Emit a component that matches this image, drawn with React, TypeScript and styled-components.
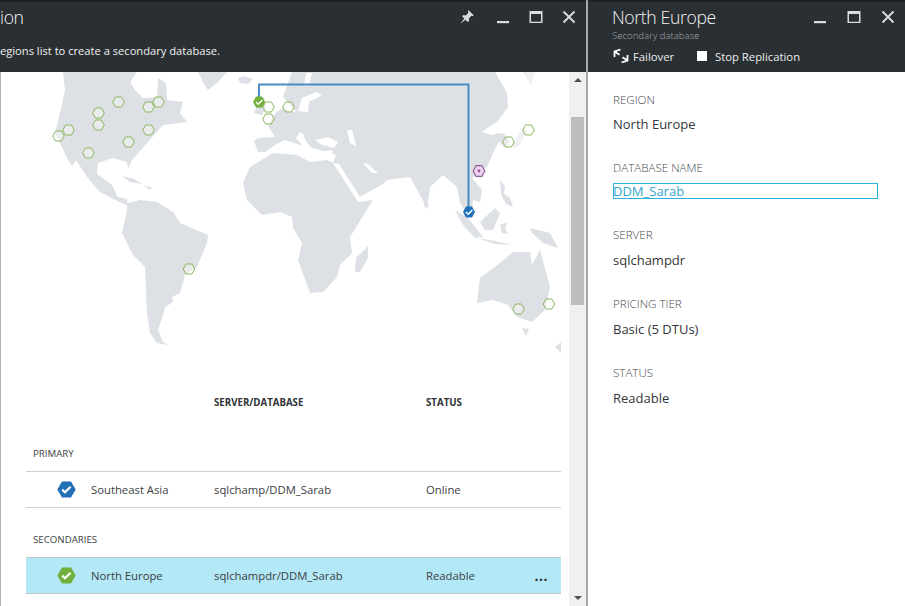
import React from 'react';
import styled, { createGlobalStyle } from 'styled-components';

const Global = createGlobalStyle`
  html, body { margin: 0; padding: 0; background: #fff; overflow: hidden; }
  * { box-sizing: border-box; }
`;

const FONT = `"Open Sans", "Noto Sans", "Liberation Sans", sans-serif`;

const Page = styled.div`
  display: flex;
  width: 905px;
  height: 606px;
  overflow: hidden;
  font-family: ${FONT};
  color: #3c3f42;
`;

const LeftBlade = styled.section`
  width: 588px;
  flex: none;
  display: flex;
  flex-direction: column;
  border-right: 2px solid #a9a9a9;
`;

const RightBlade = styled.section`
  flex: 1;
  display: flex;
  flex-direction: column;
  border-right: 2px solid #3f7391;
`;

const Header = styled.header`
  height: 72px;
  flex: none;
  background: #2a2f33;
  border-top: 2px solid #1e2225;
  display: flex;
  flex-direction: column;
  color: #fff;
  overflow: hidden;
`;

const TitleRow = styled.div<{ $inset: number }>`
  display: flex;
  align-items: flex-start;
  justify-content: space-between;
  padding-left: ${(p) => p.$inset}px;
`;

const Title = styled.h1`
  margin: 0;
  font-size: 17.6px;
  line-height: 30px;
  font-weight: 300;
  letter-spacing: -0.35px;
  color: #f4f5f5;
`;

const ClippedSubtitle = styled.div`
  margin-top: 11px;
  font-size: 11.15px;
  line-height: 16px;
  color: #f0f1f1;
  white-space: nowrap;
`;

const Controls = styled.div<{ $right: number; $gap: number }>`
  display: flex;
  align-items: flex-start;
  gap: ${(p) => p.$gap}px;
  padding: 8px ${(p) => p.$right}px 0 0;
  color: #d9dbdc;
`;

const ControlIcon = styled.svg`
  display: block;
  width: 14px;
  height: 14px;
  flex: none;
`;

const PinIcon = styled(ControlIcon)`
  margin-right: 3px;
`;

const Subtitle = styled.div`
  margin: -2px 0 0 24px;
  font-size: 9.6px;
  line-height: 12px;
  font-weight: 300;
  color: #a4a8aa;
`;

const Toolbar = styled.div`
  display: flex;
  align-items: center;
  margin: 5px 0 0 25px;
  height: 18px;
`;

const ToolItem = styled.div<{ $width: number }>`
  display: flex;
  align-items: center;
  width: ${(p) => p.$width}px;
  font-size: 11.3px;
  color: #eceded;
  white-space: nowrap;
`;

const StopSquare = styled.span`
  display: block;
  width: 10px;
  height: 10px;
  margin-right: 8px;
  background: #fff;
`;

const FailoverIcon = styled.svg`
  display: block;
  width: 16px;
  height: 16px;
  margin-right: 4px;
`;

const Body = styled.div`
  flex: 1;
  min-height: 0;
  display: flex;
`;

const Scroller = styled.div`
  flex: 1;
  min-width: 0;
  border-left: 1px solid #b0b0b0;
`;

const MapSvg = styled.svg`
  display: block;
  width: 568px;
  height: 318px;
`;

const ScrollTrack = styled.div`
  width: 17px;
  flex: none;
  background: #f0f0f0;
  display: flex;
  flex-direction: column;
  align-items: center;
  padding-top: 6px;
`;

const ArrowUp = styled.span`
  width: 0;
  height: 0;
  border-left: 4px solid transparent;
  border-right: 4px solid transparent;
  border-bottom: 4px solid #505050;
`;

const ArrowDown = styled.span`
  width: 0;
  height: 0;
  margin-top: 291px;
  border-left: 4px solid transparent;
  border-right: 4px solid transparent;
  border-top: 4px solid #505050;
`;

const Thumb = styled.div`
  width: 13px;
  height: 188px;
  margin-top: 35px;
  background: #bdbdbd;
`;

const Table = styled.div`
  margin: 0 8px 0 25px;
`;

const GRID = `65px 123px 212px 1fr auto`;

const HeadRow = styled.div`
  display: grid;
  grid-template-columns: ${GRID};
  height: 24px;
  align-items: center;
  font-size: 9.7px;
  font-weight: 700;
  color: #2f3336;
`;

const SectionLabel = styled.div<{ $height: number }>`
  height: ${(p) => p.$height}px;
  display: flex;
  align-items: flex-end;
  padding: 0 0 11px 7px;
  font-size: 9.7px;
  color: #3a3d40;
`;

const Row = styled.div<{ $selected?: boolean }>`
  display: grid;
  grid-template-columns: ${GRID};
  height: 37px;
  align-items: center;
  padding-bottom: 1px;
  font-size: 11.3px;
  color: #3c4043;
  background: ${(p) => (p.$selected ? '#b3e8f7' : 'transparent')};
  border-top: 1px solid ${(p) => (p.$selected ? '#b9c6cb' : '#cfcfcf')};
  border-bottom: 1px solid ${(p) => (p.$selected ? '#b9c6cb' : '#cfcfcf')};
`;

const IconCell = styled.div`
  padding: 1px 0 0 31px;
  display: flex;
`;

const StatusIcon = styled.svg`
  display: block;
  width: 19px;
  height: 17px;
`;

const More = styled.div`
  padding: 2px 13px 0 0;
  font-size: 14px;
  font-weight: 700;
  line-height: 10px;
  letter-spacing: 0.5px;
  color: #2c3033;
`;

const Details = styled.div`
  flex: 1;
  padding: 20px 27px 0 25px;
  background: #fff;
`;

const Field = styled.div<{ $gap?: number }>`
  margin-bottom: ${(p) => p.$gap ?? 24}px;
`;

const FieldLabel = styled.div`
  height: 16px;
  line-height: 16px;
  font-size: 11.6px;
  font-weight: 300;
  color: #44484b;
`;

const FieldValue = styled.div<{ $top?: number }>`
  height: 24px;
  margin-top: ${(p) => p.$top ?? 5}px;
  line-height: 24px;
  font-size: 13px;
  color: #33373a;
`;

const NameInput = styled.input`
  display: block;
  width: 265px;
  height: 16px;
  margin-top: 7px;
  padding: 0;
  text-indent: -1px;
  border: 1px solid #2bb5dc;
  outline: none;
  background: #fff;
  font-family: ${FONT};
  font-size: 13px;
  color: #32a7cf;
`;

const Pin = () => (
  <PinIcon viewBox="0 0 14 14">
    <path
      d="M8.6 0.3 L13.7 5.2 L12.6 6.2 L11.4 5.8 L8.8 8.4 L9.2 11 L7.8 12 L2.2 6.4 L3.2 5 L5.8 5.4 L8.4 2.8 L7.8 1.4 Z M4.4 8.6 L0.2 13.8 L5.6 9.8 Z"
      fill="currentColor"
    />
  </PinIcon>
);
const Minimize = () => (
  <ControlIcon viewBox="0 0 14 14">
    <rect x="1" y="11" width="12" height="2.2" fill="currentColor" />
  </ControlIcon>
);
const Maximize = () => (
  <ControlIcon viewBox="0 0 14 14">
    <path d="M0.5 1 H13.5 V13 H0.5 Z M2 4 V11.7 H12 V4 Z" fill="currentColor" fillRule="evenodd" />
  </ControlIcon>
);
const Close = () => (
  <ControlIcon viewBox="0 0 14 14">
    <path d="M1.5 1.5 L12.5 12.5 M12.5 1.5 L1.5 12.5" stroke="currentColor" strokeWidth="1.9" fill="none" />
  </ControlIcon>
);

const STATUS_HEX = 'M5 0.5 H14 L18.7 8.5 L14 16.5 H5 L0.3 8.5 Z';

const RowIcon = ({ fill }: { fill: string }) => (
  <StatusIcon viewBox="0 0 19 17">
    <path d={STATUS_HEX} fill={fill} />
    <path d="M5.2 8.6 L8 11.2 L13.6 5.8" fill="none" stroke="#fff" strokeWidth="2.2" />
  </StatusIcon>
);

const LAND = [
  // North America
  '63,72 65,90 60,113 55,133 60,143 68,160 72,166 76,160 87,177 100,192 113,199 122,203 128,206 127,199 118,197 112,185 97,174 98,163 113,158 127,162 128,169 132,160 148,142 163,125 187,122 180,113 183,102 167,100 166,83 158,78 157,97 143,98 135,90 130,82 137,72',
  // Greenland, Iceland
  '198,72 227,72 218,82 208,90 203,82',
  '238,78 245,76 253,79 248,84 240,83',
  // Caribbean
  '122,176 134,179 142,184 130,182',
  '144,186 152,187 150,190',
  // South America
  '128,203 140,200 157,202 173,212 180,223 208,235 207,243 197,267 185,275 180,293 172,297 173,302 165,307 163,315 158,330 163,342 168,345 157,343 150,333 147,313 145,267 133,255 122,233 125,220',
  // UK + Ireland
  '258,97 264,97 266,108 262,115 254,113 257,106',
  // Eurasia
  '258,152 254,141 258,138 275,137 268,126 275,113 283,108 290,112 296,112 283,97 292,72 495,72 507,93 508,107 497,122 490,126 482,132 493,135 498,133 504,134 510,142 504,147 499,141 493,153 487,167 472,178 482,190 480,202 473,200 472,210 470,218 460,203 457,187 443,175 430,187 427,208 410,177 387,180 383,184 358,198 333,163 336,155 320,150 300,145 285,140 275,145 265,152',
  // Africa
  '243,183 247,200 262,215 280,212 292,217 293,228 302,243 298,260 310,293 323,292 337,277 340,265 352,253 350,237 373,200 358,202 333,163 327,160 310,162 297,155 273,153 250,167',
  // Madagascar
  '355,272 356,258 368,246 368,258 360,272',
  // Sri Lanka
  '424,200 429,204 427,209 424,206',
  // Sumatra, Java
  '455,210 467,217 483,237 475,238 463,225',
  '477,238 495,241 513,245 495,244',
  // Borneo, Sulawesi, Philippines
  '480,222 495,208 500,213 493,230 485,230',
  '500,225 507,222 505,228 508,234 502,233',
  '500,180 505,186 504,194 510,198 513,207 506,204 501,194',
  // New Guinea
  '530,228 550,233 558,248 543,243 532,233',
  // Australia
  '477,303 480,278 500,263 513,252 530,252 532,265 540,250 550,287 545,310 532,322 517,317 508,305 493,300',
  // Tasmania, NZ
  '522,328 529,329 526,336',
  '555,347 561,342 561,353',
];

const FAINT_LAND = [
  // Kamchatka, Japan: barely visible in this map
  '523,72 535,72 531,85',
  '513,143 524,127 527,131 520,144 514,149',
];

const WATER = [
  // Baltic and northern inlets
  '298,111 302,98 316,92 322,95 309,102 308,112',
  '306,73 312,73 309,85 304,86',
  // Italy side of the Mediterranean
  '296,138 300,132 303,134 307,143 316,152 333,150 332,156 318,153 308,152 300,143',
  // Black Sea
  '315,140 328,137 338,142 334,148 322,145',
  // Persian Gulf
  '363,163 368,164 378,173 372,173',
  // Caspian
  '347,130 352,130 356,146 350,143',
  // Red Sea
  '333,163 339,164 360,197 358,200',
];

const HOLLOW: [number, number][] = [
  [58.5, 136], [68.5, 130], [98.5, 113], [98.5, 125], [118.5, 102], [148.5, 107], [158.5, 102],
  [148.5, 130], [128.5, 142], [88.5, 153], [268.5, 107], [268.5, 119], [288.5, 107],
  [528.5, 130], [508.5, 142], [189, 269], [518.5, 309], [549, 304],
];

const hexPoints = (x: number, y: number, w = 5.8, h = 5) =>
  `${x - w},${y} ${x - w / 2},${y - h} ${x + w / 2},${y - h} ${x + w},${y} ${x + w / 2},${y + h} ${x - w / 2},${y + h}`;

const WorldMap = () => (
  <MapSvg viewBox="1 72 568 318">
    {FAINT_LAND.map((p) => (
      <polygon key={p} points={p} fill="#eef0f2" />
    ))}
    {LAND.map((p) => (
      <polygon key={p} points={p} fill="#dde0e4" />
    ))}
    {WATER.map((p) => (
      <polygon key={p} points={p} fill="#fff" />
    ))}
    {HOLLOW.map(([x, y]) => (
      <polygon
        key={`${x}-${y}`}
        points={hexPoints(x, y)}
        fill="rgba(255,255,255,0.35)"
        stroke="#8ab85c"
        strokeWidth="1"
      />
    ))}
    <path d="M259 102 V84.5 H468.5 V212" fill="none" stroke="#4a8cc4" strokeWidth="2" />
    <polygon points={hexPoints(479, 171, 5.8, 5.4)} fill="#ecd5ee" stroke="#8a5a92" strokeWidth="1.1" />
    <circle cx="479" cy="171" r="1.4" fill="#a8489f" />
    <polygon points={hexPoints(259, 102, 6, 5.6)} fill="#6fb03c" />
    <path d="M256 102 L258.2 104.2 L262.4 100" fill="none" stroke="#fff" strokeWidth="1.5" />
    <polygon points={hexPoints(469, 212, 6, 5.6)} fill="#2270b7" />
    <path d="M466 212 L468.2 214.2 L472.4 210" fill="none" stroke="#fff" strokeWidth="1.5" />
  </MapSvg>
);

export default function App() {
  return (
    <Page>
      <Global />
      <LeftBlade>
        <Header>
          <TitleRow $inset={0}>
            <Title>ion</Title>
            <Controls $right={10} $gap={19}>
              <Pin />
              <Minimize />
              <Maximize />
              <Close />
            </Controls>
          </TitleRow>
          <ClippedSubtitle>egions list to create a secondary database.</ClippedSubtitle>
        </Header>
        <Body>
          <Scroller>
            <WorldMap />
            <Table>
              <HeadRow>
                <span />
                <span />
                <span>SERVER/DATABASE</span>
                <span>STATUS</span>
              </HeadRow>
              <SectionLabel $height={57}>PRIMARY</SectionLabel>
              <Row>
                <IconCell><RowIcon fill="#2270b7" /></IconCell>
                <span>Southeast Asia</span>
                <span>sqlchamp/DDM_Sarab</span>
                <span>Online</span>
              </Row>
              <SectionLabel $height={49}>SECONDARIES</SectionLabel>
              <Row $selected>
                <IconCell><RowIcon fill="#6fb03c" /></IconCell>
                <span>North Europe</span>
                <span>sqlchampdr/DDM_Sarab</span>
                <span>Readable</span>
                <More>...</More>
              </Row>
            </Table>
          </Scroller>
          <ScrollTrack>
            <ArrowUp />
            <Thumb />
            <ArrowDown />
          </ScrollTrack>
        </Body>
      </LeftBlade>
      <RightBlade>
        <Header>
          <TitleRow $inset={24}>
            <Title>North Europe</Title>
            <Controls $right={10} $gap={20}>
              <Minimize />
              <Maximize />
              <Close />
            </Controls>
          </TitleRow>
          <Subtitle>Secondary database</Subtitle>
          <Toolbar>
            <ToolItem $width={84}>
              <FailoverIcon viewBox="0 0 16 16">
                <path
                  d="M7.5 1.5 L1.5 3.5 L1.5 9 M1.5 3.5 L6.5 6.8 M8.5 14.5 L14.5 12.5 L14.5 7 M14.5 12.5 L9.5 9.2"
                  fill="none"
                  stroke="#fff"
                  strokeWidth="1.8"
                />
              </FailoverIcon>
              Failover
            </ToolItem>
            <ToolItem $width={120}>
              <StopSquare />
              Stop Replication
            </ToolItem>
          </Toolbar>
        </Header>
        <Details>
          <Field>
            <FieldLabel>REGION</FieldLabel>
            <FieldValue $top={4}>North Europe</FieldValue>
          </Field>
          <Field $gap={28}>
            <FieldLabel>DATABASE NAME</FieldLabel>
            <NameInput readOnly value="DDM_Sarab" />
          </Field>
          <Field>
            <FieldLabel>SERVER</FieldLabel>
            <FieldValue>sqlchampdr</FieldValue>
          </Field>
          <Field>
            <FieldLabel>PRICING TIER</FieldLabel>
            <FieldValue>Basic (5 DTUs)</FieldValue>
          </Field>
          <Field>
            <FieldLabel>STATUS</FieldLabel>
            <FieldValue>Readable</FieldValue>
          </Field>
        </Details>
      </RightBlade>
    </Page>
  );
}
